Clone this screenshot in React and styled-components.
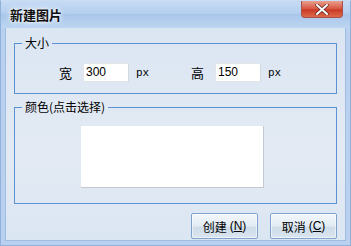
import React from "react";
import styled, { createGlobalStyle } from "styled-components";

const Global = createGlobalStyle`
  html, body { margin: 0; padding: 0; background: #ffffff; }
  body { font-family: "Noto Sans CJK SC", "DejaVu Sans", sans-serif; }
`;

const Window = styled.div`
  width: 351px;
  height: 246px;
  box-sizing: border-box;
  display: flex;
  flex-direction: column;
  background: #b9d1ee;
  padding: 0 4px 4px 4px;
  border: 1px solid #8fb2dc;
  border-top-color: #c9dcf2;
`;

const TitleBar = styled.div`
  height: 27px;
  display: flex;
  align-items: flex-start;
  justify-content: space-between;
  margin: 0 -4px;
  padding: 0 7px 0 9px;
  background: linear-gradient(to bottom, #c6dbf4 0%, #b5cfee 45%, #a9c6ea 50%, #bdd5f1 100%);
`;

const Title = styled.div`
  font-size: 13px;
  font-weight: bold;
  color: #111;
  line-height: 27px;
  text-shadow: 0 0 6px #ffffff, 0 0 3px #ffffff;
`;

const CloseButton = styled.div`
  width: 42px;
  height: 17px;
  box-sizing: border-box;
  display: flex;
  align-items: center;
  justify-content: center;
  border: 1px solid #a8504a;
  border-top: none;
  border-radius: 0 0 4px 4px;
  background: linear-gradient(to bottom, #e8a08e 0%, #d8533f 50%, #c83a26 55%, #e06a4a 100%);
`;

const Body = styled.div`
  flex: 1;
  display: flex;
  flex-direction: column;
  padding: 8px 8px 0 8px;
  background: linear-gradient(to bottom, #dbe6f3 0%, #e3eaf3 60%, #dbe6f3 100%);
  border: 1px solid #9fbee4;
  border-top: none;
`;

const Group = styled.fieldset`
  margin: 0;
  padding: 0;
  border: 1px solid #5b92d4;
  height: ${(p) => p.h}px;
  box-sizing: border-box;
  display: flex;
  flex-direction: column;
  margin-top: ${(p) => p.mt || 0}px;
  min-width: 0;
`;

const Legend = styled.legend`
  margin-left: 7px;
  padding: 0 3px;
  font-size: 12px;
  line-height: 14px;
  color: #000;
`;

const SizeRow = styled.div`
  display: flex;
  align-items: center;
  margin-top: 13px;
  padding-left: 44px;
`;

const Field = styled.div`
  display: flex;
  align-items: center;
  width: 132px;
`;

const Label = styled.span`
  font-size: 13px;
  width: 24px;
  color: #000;
`;

const Input = styled.div`
  width: 46px;
  height: 19px;
  box-sizing: border-box;
  background: #fff;
  border: 1px solid #e2e6ea;
  border-right-color: #d3d8de;
  font-family: "Liberation Sans", "DejaVu Sans", sans-serif;
  font-size: 12px;
  line-height: 17px;
  padding-left: 2px;
  color: #000;
`;

const Unit = styled.span`
  font-family: "Liberation Mono", monospace;
  font-size: 11px;
  margin-left: 7px;
  color: #000;
`;

const SwatchRow = styled.div`
  display: flex;
  justify-content: center;
  padding-right: 6px;
  margin-top: 12px;
`;

const ColorBox = styled.div`
  width: 183px;
  height: 62px;
  box-sizing: border-box;
  background: #ffffff;
  border-right: 1px solid #c3c9d1;
  border-bottom: 1px solid #c3c9d1;
`;

const Footer = styled.div`
  display: flex;
  justify-content: flex-end;
  gap: 12px;
  padding: 9px 0 0 0;
`;

const Button = styled.div`
  width: 67px;
  height: 26px;
  box-sizing: border-box;
  display: flex;
  align-items: center;
  justify-content: center;
  border: 1px solid #7fa3cc;
  border-radius: 2px;
  background: linear-gradient(to bottom, #f3f7fb 0%, #e2ebf4 50%, #cfdde9 55%, #d9e5ef 100%);
  font-size: 12px;
  color: #000;
  box-shadow: inset 0 0 0 1px #ffffff88;
`;

const Key = styled.span`
  font-family: "Liberation Sans", sans-serif;
  margin-left: 3px;
  u { text-decoration: underline; }
`;

export default function App() {
  return (
    <>
      <Global />
      <Window>
        <TitleBar>
          <Title>新建图片</Title>
          <CloseButton>
            <svg width="14" height="11" viewBox="0 0 14 11">
              <path
                d="M2 1 L12 10 M12 1 L2 10"
                stroke="#5a2a25"
                strokeWidth="3.4"
                strokeLinecap="round"
              />
              <path
                d="M2 1 L12 10 M12 1 L2 10"
                stroke="#ffffff"
                strokeWidth="2"
                strokeLinecap="round"
              />
            </svg>
          </CloseButton>
        </TitleBar>
        <Body>
          <Group h={58}>
            <Legend>大小</Legend>
            <SizeRow>
              <Field>
                <Label>宽</Label>
                <Input>300</Input>
                <Unit>px</Unit>
              </Field>
              <Field>
                <Label>高</Label>
                <Input>150</Input>
                <Unit>px</Unit>
              </Field>
            </SizeRow>
          </Group>
          <Group h={104} mt={6}>
            <Legend>颜色(点击选择)</Legend>
            <SwatchRow>
              <ColorBox />
            </SwatchRow>
          </Group>
          <Footer>
            <Button>
              创建<Key>(<u>N</u>)</Key>
            </Button>
            <Button>
              取消<Key>(<u>C</u>)</Key>
            </Button>
          </Footer>
        </Body>
      </Window>
    </>
  );
}
